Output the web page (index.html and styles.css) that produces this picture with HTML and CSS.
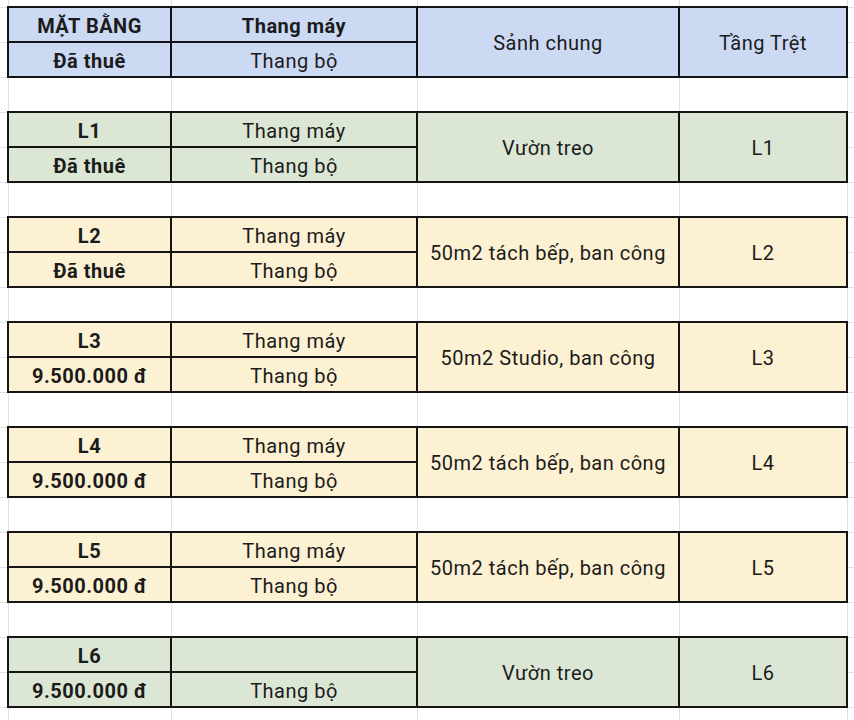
FILE: index.html
```html
<!DOCTYPE html>
<html lang="vi">
<head>
<meta charset="utf-8">
<link rel="stylesheet" href="styles.css">
</head>
<body>
<table class="sheet">
  <colgroup>
    <col class="c-edge-l">
    <col class="c1">
    <col class="c2">
    <col class="c3">
    <col class="c4">
    <col class="c-edge-r">
  </colgroup>
  <tr class="top"><td></td><td></td><td></td><td></td><td></td><td></td></tr>

  <tr class="grp blue first"><td class="edge"></td><td class="b">MẶT BẰNG</td><td class="b">Thang máy</td><td rowspan="2">Sảnh chung</td><td rowspan="2">Tầng Trệt</td><td class="edge"></td></tr>
  <tr class="grp blue last"><td class="edge"></td><td class="b">Đã thuê</td><td>Thang bộ</td><td class="edge"></td></tr>
  <tr class="gap"><td></td><td></td><td></td><td></td><td></td><td></td></tr>

  <tr class="grp green first"><td class="edge"></td><td class="b">L1</td><td>Thang máy</td><td rowspan="2">Vườn treo</td><td rowspan="2">L1</td><td class="edge"></td></tr>
  <tr class="grp green last"><td class="edge"></td><td class="b">Đã thuê</td><td>Thang bộ</td><td class="edge"></td></tr>
  <tr class="gap"><td></td><td></td><td></td><td></td><td></td><td></td></tr>

  <tr class="grp yellow first"><td class="edge"></td><td class="b">L2</td><td>Thang máy</td><td rowspan="2">50m2 tách bếp, ban công</td><td rowspan="2">L2</td><td class="edge"></td></tr>
  <tr class="grp yellow last"><td class="edge"></td><td class="b">Đã thuê</td><td>Thang bộ</td><td class="edge"></td></tr>
  <tr class="gap"><td></td><td></td><td></td><td></td><td></td><td></td></tr>

  <tr class="grp yellow first"><td class="edge"></td><td class="b">L3</td><td>Thang máy</td><td rowspan="2">50m2 Studio, ban công</td><td rowspan="2">L3</td><td class="edge"></td></tr>
  <tr class="grp yellow last"><td class="edge"></td><td class="b">9.500.000 đ</td><td>Thang bộ</td><td class="edge"></td></tr>
  <tr class="gap"><td></td><td></td><td></td><td></td><td></td><td></td></tr>

  <tr class="grp yellow first"><td class="edge"></td><td class="b">L4</td><td>Thang máy</td><td rowspan="2">50m2 tách bếp, ban công</td><td rowspan="2">L4</td><td class="edge"></td></tr>
  <tr class="grp yellow last"><td class="edge"></td><td class="b">9.500.000 đ</td><td>Thang bộ</td><td class="edge"></td></tr>
  <tr class="gap"><td></td><td></td><td></td><td></td><td></td><td></td></tr>

  <tr class="grp yellow first"><td class="edge"></td><td class="b">L5</td><td>Thang máy</td><td rowspan="2">50m2 tách bếp, ban công</td><td rowspan="2">L5</td><td class="edge"></td></tr>
  <tr class="grp yellow last"><td class="edge"></td><td class="b">9.500.000 đ</td><td>Thang bộ</td><td class="edge"></td></tr>
  <tr class="gap"><td></td><td></td><td></td><td></td><td></td><td></td></tr>

  <tr class="grp green first"><td class="edge"></td><td class="b">L6</td><td></td><td rowspan="2">Vườn treo</td><td rowspan="2">L6</td><td class="edge"></td></tr>
  <tr class="grp green last"><td class="edge"></td><td class="b">9.500.000 đ</td><td>Thang bộ</td><td class="edge"></td></tr>
  <tr class="gap"><td></td><td></td><td></td><td></td><td></td><td></td></tr>
</table>
</body>
</html>
```

FILE: styles.css
```css
html, body {
  margin: 0;
  padding: 0;
  background: #ffffff;
  overflow: hidden;
}

.sheet {
  border-collapse: collapse;
  table-layout: fixed;
  width: 880px;
  font-family: Roboto, "Noto Sans", "Liberation Sans", sans-serif;
  font-size: 20px;
  letter-spacing: 0.5px;
  color: #1b1b1b;
}

.c-edge-l { width: 8px; }
.c1 { width: 163px; }
.c2 { width: 246px; }
.c3 { width: 262px; }
.c4 { width: 168px; }
.c-edge-r { width: 33px; }

.sheet td {
  border: 1px solid #e1e1e1;
  padding: 2px 0 0 0;
  text-align: center;
  vertical-align: middle;
  white-space: nowrap;
  line-height: 1;
}

.top { height: 7px; }
.top td { border-top: none; padding: 0; }

.grp, .gap { height: 35px; }

.grp td {
  border: 2px solid #151515;
}
.grp td.edge {
  border: 1px solid #e1e1e1;
  background: #ffffff;
}
.grp td.edge:first-child { border-left: none; }

.gap td:first-child, .top td:first-child { border-left: none; }

.blue td { background: #ccd9f3; }
.green td { background: #dbe7d4; }
.yellow td { background: #fcf1d2; }

.b { font-weight: 700; }
```
